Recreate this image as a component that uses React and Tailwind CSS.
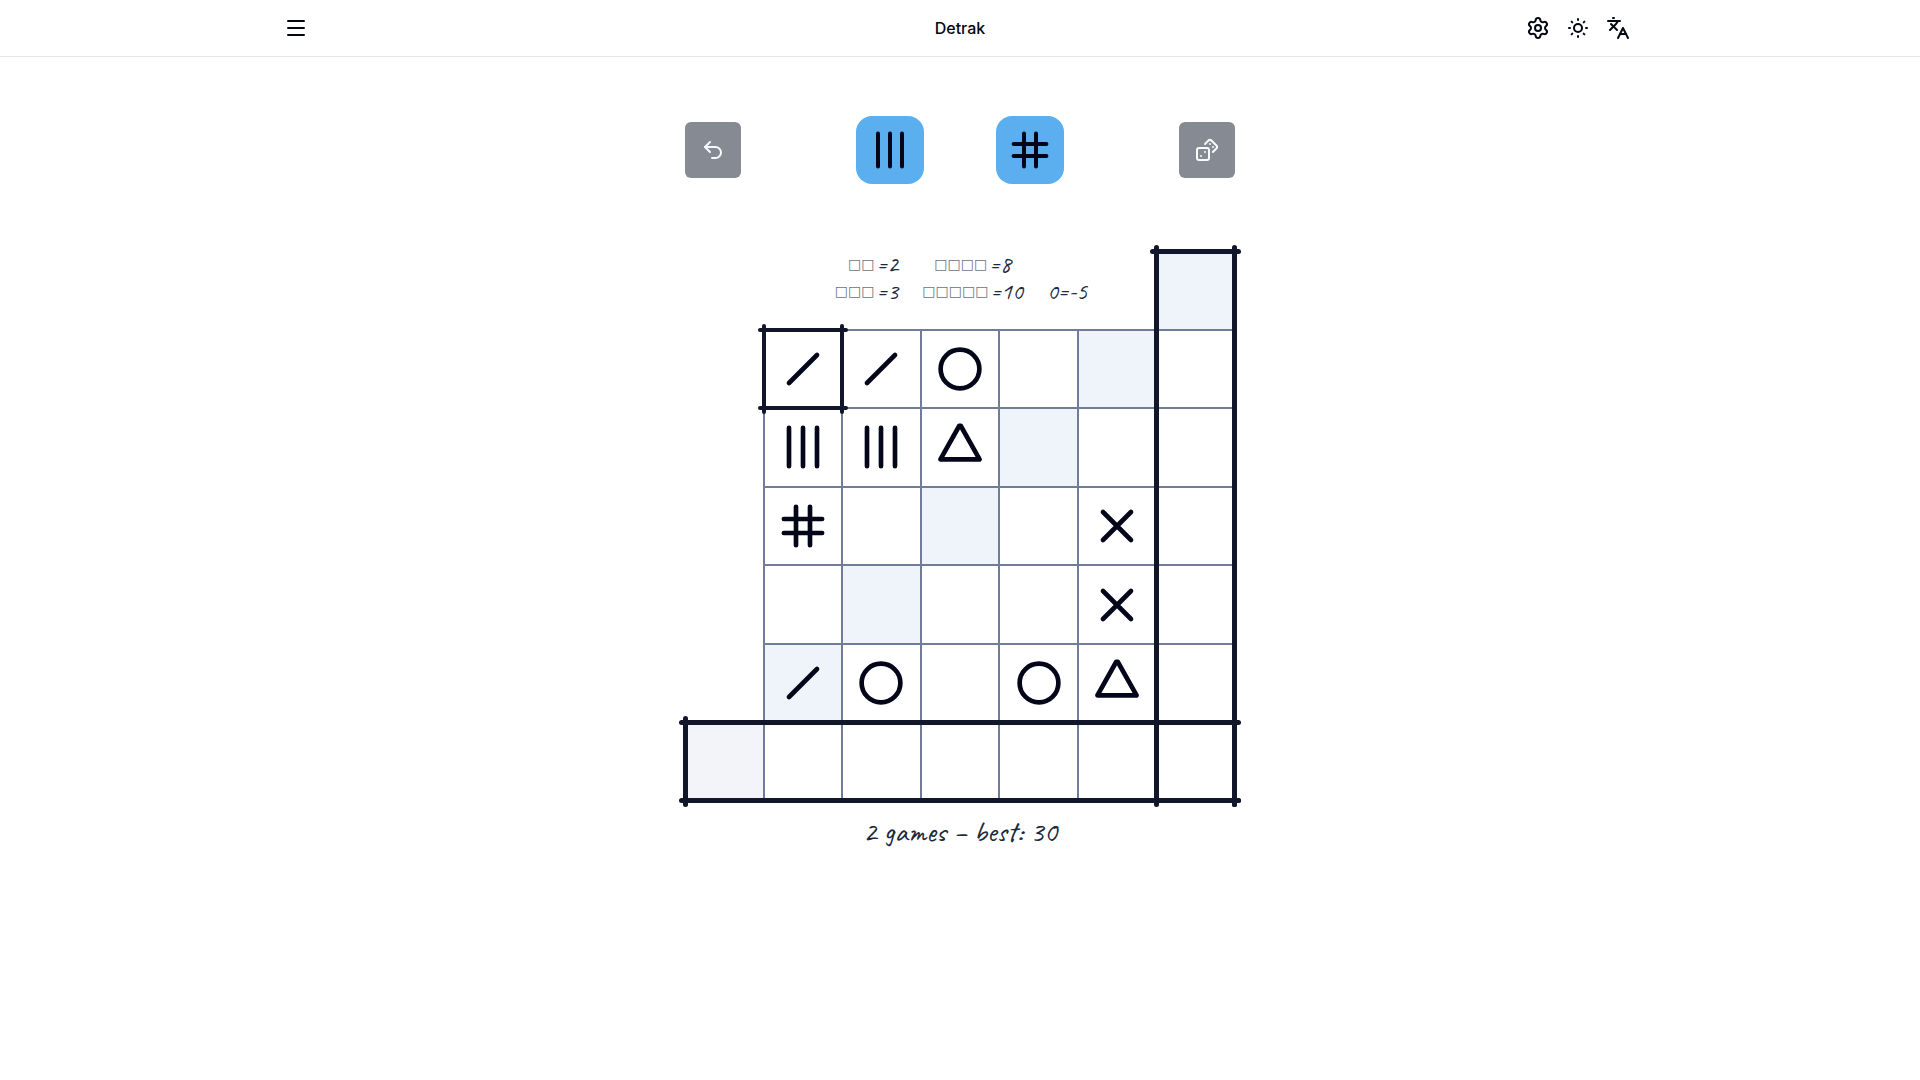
import { Dices, Languages, Menu, Settings, SunMedium, Undo2 } from "lucide-react";

const SHAPES = {
  slash: <path d="M6 18 18 6" />,
  circle: <circle cx="12" cy="12" r="8.3" />,
  bars: <path d="M6 3.8v16.4M12 3.8v16.4M18 3.8v16.4" />,
  triangle: <path d="M11.7 2.9h.6L20.4 17.3H3.6Z" />,
  hash: <path d="M9 3.8v16.4M15 3.8v16.4M3.8 9h16.4M3.8 15h16.4" />,
  cross: <path d="M6 6 18 18M18 6 6 18" />,
};

function Shape({ name, className }) {
  return (
    <svg
      viewBox="0 0 24 24"
      fill="none"
      stroke="currentColor"
      strokeWidth="2"
      strokeLinecap="round"
      strokeLinejoin="round"
      className={className}
      aria-hidden="true"
    >
      {SHAPES[name]}
    </svg>
  );
}

const ROWS = [
  ["slash", "slash", "circle", null, null],
  ["bars", "bars", "triangle", null, null],
  ["hash", null, null, null, "cross"],
  [null, null, null, null, "cross"],
  ["slash", "circle", null, "circle", "triangle"],
];

const ROW_START = ["row-start-2", "row-start-3", "row-start-4", "row-start-5", "row-start-6"];
const COL_START = ["col-start-1", "col-start-2", "col-start-3", "col-start-4", "col-start-5", "col-start-6", "col-start-7"];

const CELL = "-m-px flex min-h-0 min-w-0 items-center justify-center border-2 border-[#717c98]";

function Box({ area, thin }) {
  const h = thin ? "h-1" : "h-[5px]";
  const w = thin ? "w-1" : "w-[5px]";
  const line = "absolute rounded-full bg-[#12162a]";
  return (
    <div className={`pointer-events-none relative ${area}`}>
      <span className={`${line} ${h} -top-0.5 -right-1.5 -left-1.5`} />
      <span className={`${line} ${h} -right-1.5 -bottom-0.5 -left-1.5`} />
      <span className={`${line} ${w} -top-1.5 -bottom-1.5 -left-0.5`} />
      <span className={`${line} ${w} -top-1.5 -right-0.5 -bottom-1.5`} />
    </div>
  );
}

function Rule({ count, value }) {
  return (
    <span className="flex items-center gap-0.5">
      <span className="font-['DejaVu_Sans'] text-sm leading-[27px] text-gray-500">{"□".repeat(count)}</span>
      <span>={value}</span>
    </span>
  );
}

function IconButton({ label, children }) {
  return (
    <button type="button" aria-label={label} className="flex size-9 items-center justify-center">
      {children}
    </button>
  );
}

export default function App() {
  return (
    <div className="min-h-screen bg-white font-['Inter',sans-serif] text-gray-950">
      <header className="border-b border-gray-200">
        <div className="mx-auto grid h-14 max-w-[1400px] grid-cols-3 items-center px-6">
          <button type="button" aria-label="Menu" className="justify-self-start">
            <Menu size={24} />
          </button>
          <h1 className="text-center text-base font-medium">Detrak</h1>
          <div className="flex gap-1 justify-self-end">
            <IconButton label="Settings"><Settings size={24} /></IconButton>
            <IconButton label="Theme"><SunMedium size={24} /></IconButton>
            <IconButton label="Language"><Languages size={24} /></IconButton>
          </div>
        </div>
      </header>

      <main className="mx-auto w-full max-w-[550px] pt-[59px]">
        <div className="flex items-center justify-between">
          <button type="button" aria-label="Undo" className="flex size-14 items-center justify-center rounded-md bg-[#868a93] text-slate-50">
            <Undo2 size={24} />
          </button>
          <div className="flex gap-18">
            <button type="button" aria-label="Bars" className="flex size-17 items-center justify-center rounded-2xl bg-[#5cafee] text-slate-950">
              <Shape name="bars" className="size-12" />
            </button>
            <button type="button" aria-label="Hash" className="flex size-17 items-center justify-center rounded-2xl bg-[#5cafee] text-slate-950">
              <Shape name="hash" className="size-12" />
            </button>
          </div>
          <button type="button" aria-label="Roll dice" className="flex size-14 items-center justify-center rounded-md bg-[#868a93] text-slate-50">
            <Dices size={24} />
          </button>
        </div>

        <div className="mt-[67px] grid aspect-square grid-cols-7 grid-rows-7 text-slate-950">
          <div className="col-span-5 col-start-2 row-start-1 grid auto-rows-min grid-cols-[65px_101px_40px] justify-center gap-x-6 font-['Caveat',cursive] text-2xl leading-[27px] whitespace-nowrap text-gray-800">
            <div className="justify-self-end"><Rule count={2} value="2" /></div>
            <div className="justify-self-center"><Rule count={4} value="8" /></div>
            <div />
            <div className="justify-self-end"><Rule count={3} value="3" /></div>
            <div className="justify-self-center"><Rule count={5} value="10" /></div>
            <div>0=-5</div>
          </div>
          <div className={`${CELL} col-start-7 row-start-1 bg-[#eff3fa]`} />

          {ROWS.map((row, r) => [
            ...row.map((name, c) => (
              <button
                type="button"
                key={`${r}-${c}`}
                aria-label={name || "empty"}
                className={`${CELL} ${ROW_START[r]} ${COL_START[c + 1]} ${r + c === 4 ? "bg-[#eff3fa]" : ""}`}
              >
                {name && <Shape name={name} className="size-14 shrink-0" />}
              </button>
            )),
            <div key={`${r}-score`} className={`${CELL} ${ROW_START[r]} col-start-7`} />,
          ])}

          {COL_START.map((col, n) => (
            <div key={col} className={`${CELL} ${col} row-start-7 ${n === 0 ? "bg-[#f2f4f9]" : ""}`} />
          ))}

          <Box area="col-start-7 row-start-1 row-span-7" />
          <Box area="col-start-1 col-span-7 row-start-7" />
          <Box area="col-start-2 row-start-2" thin />
        </div>

        <p className="mt-2.5 text-center font-['Caveat',cursive] text-[30px] leading-10 text-gray-800">
          2 games – best: 30
        </p>
      </main>
    </div>
  );
}
